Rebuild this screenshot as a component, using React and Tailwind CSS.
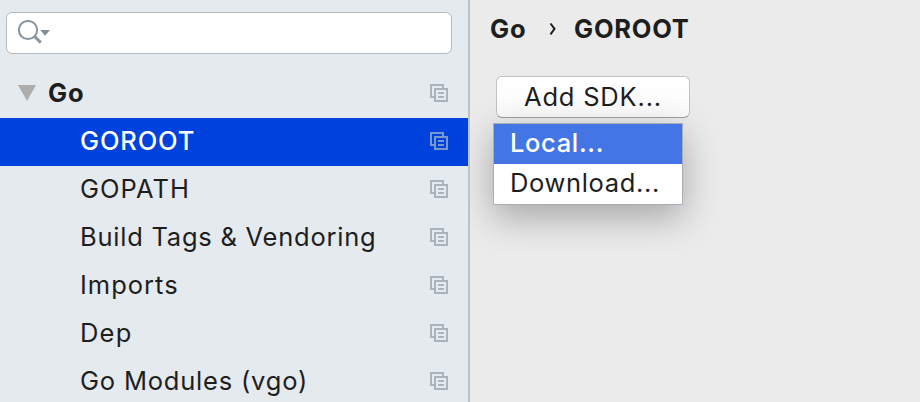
const items = [
  { label: 'GOROOT', selected: true, tracking: 'tracking-[0.85px]' },
  { label: 'GOPATH', tracking: 'tracking-[1.05px]' },
  { label: 'Build Tags & Vendoring', tracking: 'tracking-[0.76px]' },
  { label: 'Imports', tracking: 'tracking-[1px]' },
  { label: 'Dep', tracking: 'tracking-[1.2px]' },
  { label: 'Go Modules (vgo)', tracking: 'tracking-[0.8px]' },
];

function CopyIcon({ className }) {
  return (
    <svg width="18" height="18" viewBox="0 0 18 18" className={`mb-[2px] shrink-0 ${className}`} fill="currentColor">
      <path d="M0 0h14v4h-2V2H2v10h2v2H0z" />
      <path fillRule="evenodd" d="M4 4h14v14H4zM6 6v10h10V6z" />
      <path d="M8 8h6v2H8zM8 12h6v2H8z" />
    </svg>
  );
}

function SearchField() {
  return (
    <div className="mx-[6px] mt-3 flex h-[42px] w-[446px] rounded-[6px] border border-[#b4b9bc] bg-white pl-[11px] pt-[7px]">
      <svg width="33" height="25" viewBox="0 0 33 25" fill="none">
        <circle cx="10" cy="10" r="9.1" stroke="#8997a1" strokeWidth="2" />
        <path d="M16.4 16.2l6.4 6.4" stroke="#8997a1" strokeWidth="3" />
        <path d="M22.3 10h9.6l-4.8 5.8z" fill="#7d8d98" />
      </svg>
    </div>
  );
}

function TreeRow({ label, selected, tracking }) {
  return (
    <div className={`flex h-12 items-center justify-between pl-20 pr-5 ${selected ? 'bg-[#0042de] text-white' : ''}`}>
      <span className={`mb-[2px] ${tracking} ${selected ? 'font-medium' : ''}`}>{label}</span>
      <CopyIcon className={selected ? 'text-[#7897cb]' : 'text-[#a8b5be]'} />
    </div>
  );
}

export default function App() {
  return (
    <div className="flex h-[402px] w-[920px] overflow-hidden whitespace-nowrap bg-[#ebebeb] font-['Inter',sans-serif] text-[25.5px] leading-[30px] text-[#1e1e1e]">
      <aside className="relative z-10 h-full w-[470px] shrink-0 overflow-hidden border-r-2 border-[#bfc1c3] bg-[#e5eaee]">
        <SearchField />
        <div className="mt-4 flex h-12 items-center pl-[18px] pr-5">
          <svg width="18" height="16" viewBox="0 0 18 16" className="mb-[2px]">
            <path d="M0 0h18L9 16z" fill="#adadad" />
          </svg>
          <span className="mb-[2px] ml-3 flex-1 font-bold tracking-[0.8px]">Go</span>
          <CopyIcon className="text-[#a8b5be]" />
        </div>
        {items.map((item) => (
          <TreeRow key={item.label} {...item} />
        ))}
      </aside>
      <main className="flex-1">
        <div className="flex items-center pl-5 pt-[14px] font-bold">
          <span className="w-[59px] tracking-[0.8px]">Go</span>
          <svg width="8" height="14" viewBox="0 0 8 14" fill="none" className="mr-[17px]">
            <path d="M1.5 1.5l4 5.3-4 5.5" stroke="#1e1e1e" strokeWidth="2" />
          </svg>
          <span className="tracking-[0.75px]">GOROOT</span>
        </div>
        <div className="relative ml-[26px] mt-8 w-[194px]">
          <button className="flex h-[42px] w-full items-center rounded-[6px] border border-[#c2c2c2] border-b-[#a0a0a0] bg-linear-to-b from-white to-[#fafafa] pl-[27px] tracking-[0.8px]">
            Add SDK...
          </button>
          <div className="absolute -left-[3px] top-[47px] w-[190px] border border-[#a9adb5] bg-white shadow-[0_12px_36px_rgba(0,0,0,0.3)]">
            <div className="flex h-10 items-center bg-[#4375e5] pb-[2px] pl-4 font-medium tracking-[0.65px] text-white">Local...</div>
            <div className="flex h-10 items-center pb-[2px] pl-4 tracking-[0.65px]">Download...</div>
          </div>
        </div>
      </main>
    </div>
  );
}
